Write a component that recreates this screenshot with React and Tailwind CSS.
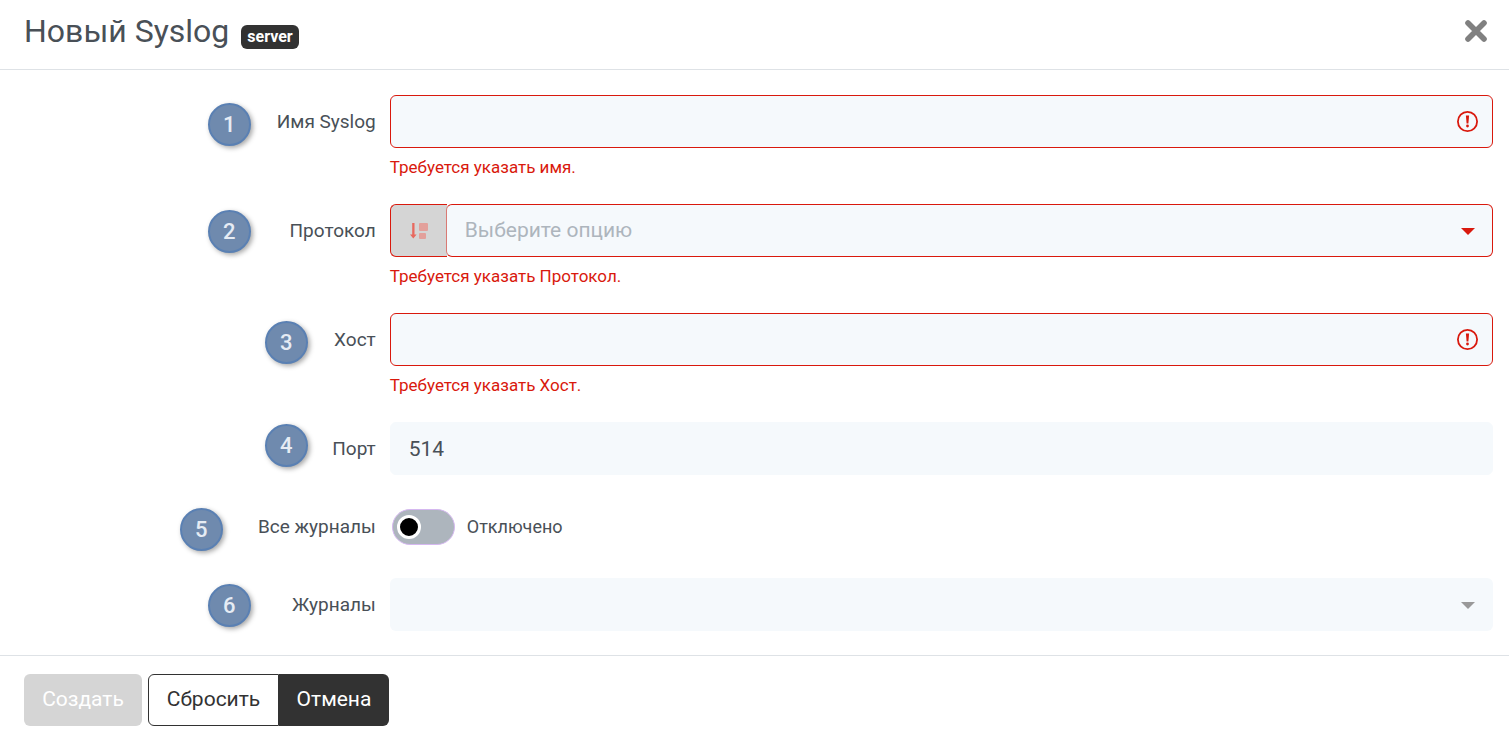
import React, { useState } from "react";

const badgeSpots = {
  1: "right-[125px] top-2",
  2: "right-[125px] top-1.5",
  3: "right-[68px] top-2",
  4: "right-[68px] top-0.5",
  5: "right-[153px] top-2",
  6: "right-[125px] top-1.5",
};

function StepBadge({ number }) {
  return (
    <span
      className={`absolute flex size-[43px] items-center justify-center rounded-full border-2 border-[#5a80b3] bg-[#6f8aae] text-[22px] font-medium leading-none text-[#e6ecf4] shadow-[2px_2px_5px_rgba(0,0,0,0.35)] ${badgeSpots[number]}`}
    >
      {number}
    </span>
  );
}

function Row({ number, label, id, error, children }) {
  return (
    <div className="grid grid-cols-[1fr_3fr]">
      <div className="flex h-[53px] items-center justify-end pr-[14px]">
        <div className="relative flex h-[53px] items-center">
          <StepBadge number={number} />
          <label htmlFor={id} className="whitespace-nowrap text-[19px] leading-6 text-[#495057]">
            {label}
          </label>
        </div>
      </div>
      <div className="min-w-0">
        {children}
        {error && (
          <p id={`${id}-error`} className="mt-2 text-[17px] leading-[23px] text-[#d9190d]">
            {error}
          </p>
        )}
      </div>
    </div>
  );
}

function TextField({ id, invalid, defaultValue }) {
  return (
    <div className="relative h-[53px]">
      <input
        id={id}
        type="text"
        defaultValue={defaultValue}
        aria-invalid={invalid || undefined}
        aria-describedby={invalid ? `${id}-error` : undefined}
        className={`h-full w-full rounded-md border bg-[#f5f9fc] px-[18px] text-[21px] text-[#495057] outline-none ${
          invalid ? "border-[#d9190d]" : "border-[#f5f9fc]"
        }`}
      />
      {invalid && (
        <svg
          viewBox="0 0 21 21"
          className="pointer-events-none absolute right-[15px] top-4 size-[21px]"
          fill="none"
          aria-hidden="true"
        >
          <circle cx="10.5" cy="10.5" r="9.6" stroke="#d9190d" strokeWidth="1.8" />
          <path d="M8.9 4.6h3.2l-.7 7.8H9.6z" fill="#d9190d" />
          <circle cx="10.5" cy="15" r="1.4" fill="#d9190d" />
        </svg>
      )}
    </div>
  );
}

function Caret({ className }) {
  return (
    <svg
      viewBox="0 0 14 7"
      className={`pointer-events-none absolute right-[18px] top-6 h-[7px] w-[14px] ${className}`}
      fill="currentColor"
      aria-hidden="true"
    >
      <path d="M0 0h14L7 7z" />
    </svg>
  );
}

export default function App() {
  const [all, setAll] = useState(false);

  return (
    <form
      className="bg-white font-['Roboto','Liberation_Sans',sans-serif]"
      onSubmit={(e) => e.preventDefault()}
    >
      <header className="flex h-[70px] items-center justify-between border-b border-[#dee2e6] pb-2 pl-6 pr-[22px]">
        <div className="flex items-center gap-3">
          <h1 className="text-[32px] leading-10 text-[#495057]">Новый Syslog</h1>
          <span className="mt-3 flex h-6 items-center rounded-md bg-[#323232] px-1.5 text-base font-bold text-white">
            server
          </span>
        </div>
        <button type="button" aria-label="Закрыть" className="text-[#808080]">
          <svg viewBox="0 0 22 22" className="size-[22px]" fill="none" aria-hidden="true">
            <path d="M3 3l16 16M19 3L3 19" stroke="currentColor" strokeWidth="5.6" strokeLinecap="round" />
          </svg>
        </button>
      </header>

      <main className="flex flex-col gap-[25px] pb-6 pl-[22px] pr-4 pt-[25px]">
        <Row number={1} label="Имя Syslog" id="name" error="Требуется указать имя.">
          <TextField id="name" invalid />
        </Row>

        <Row number={2} label="Протокол" id="protocol" error="Требуется указать Протокол.">
          <div className="flex h-[53px]">
            <span className="flex w-[57px] shrink-0 items-center justify-center rounded-l-md border border-r-0 border-[#d9190d] bg-[#d5d5d5]">
              <svg viewBox="0 0 20 18" className="h-[18px] w-5" aria-hidden="true">
                <path d="M3.2 1h2.3v11.4h2.1L4.3 16.6 1 12.4h2.2z" fill="#e8695f" />
                <rect x="10" y="1" width="9" height="8" rx="1" fill="#e3a09b" />
                <rect x="10" y="11" width="7" height="6" rx="1" fill="#e3a09b" />
              </svg>
            </span>
            <div className="relative -ml-px min-w-0 flex-1">
              <select
                id="protocol"
                defaultValue=""
                aria-invalid="true"
                aria-describedby="protocol-error"
                className="h-full w-full appearance-none rounded-md border border-[#d9190d] border-l-[#d97a74] bg-[#f5f9fc] px-[18px] text-[21px] text-[#adb5bd] outline-none"
              >
                <option value="">Выберите опцию</option>
                <option value="tcp">TCP</option>
                <option value="udp">UDP</option>
              </select>
              <Caret className="text-[#d9190d]" />
            </div>
          </div>
        </Row>

        <Row number={3} label="Хост" id="host" error="Требуется указать Хост.">
          <TextField id="host" invalid />
        </Row>

        <Row number={4} label="Порт" id="port">
          <TextField id="port" defaultValue="514" />
        </Row>

        <Row number={5} label="Все журналы" id="all-logs">
          <div className="flex h-[53px] items-center gap-3 pl-0.5">
            <input
              id="all-logs"
              type="checkbox"
              role="switch"
              checked={all}
              onChange={(e) => setAll(e.target.checked)}
              className="flex h-9 w-[63px] cursor-pointer appearance-none items-center rounded-full border border-[#d5b8f0] bg-[#adb5bd] px-1 before:size-6 before:rounded-full before:border-[3px] before:border-white before:bg-black before:content-[''] checked:justify-end"
            />
            <span className="text-[18px] leading-6 text-[#495057]">
              {all ? "Включено" : "Отключено"}
            </span>
          </div>
        </Row>

        <Row number={6} label="Журналы" id="logs">
          <div className="relative h-[53px]">
            <select
              id="logs"
              defaultValue=""
              className="h-full w-full appearance-none rounded-md bg-[#f5f9fc] px-[18px] text-[21px] text-[#495057] outline-none"
            >
              <option value=""></option>
            </select>
            <Caret className="text-[#999999]" />
          </div>
        </Row>
      </main>

      <footer className="flex gap-1.5 border-t border-[#dee2e6] px-6 py-[18px] text-[21px]">
        <button type="submit" disabled className="h-[52px] w-[118px] rounded-md bg-[#d5d5d5] text-white">
          Создать
        </button>
        <div className="flex">
          <button
            type="reset"
            className="h-[52px] w-[131px] rounded-l-md border border-[#323232] bg-white text-[#323232]"
          >
            Сбросить
          </button>
          <button type="button" className="h-[52px] w-[110px] rounded-r-md bg-[#323232] text-white">
            Отмена
          </button>
        </div>
      </footer>
    </form>
  );
}
